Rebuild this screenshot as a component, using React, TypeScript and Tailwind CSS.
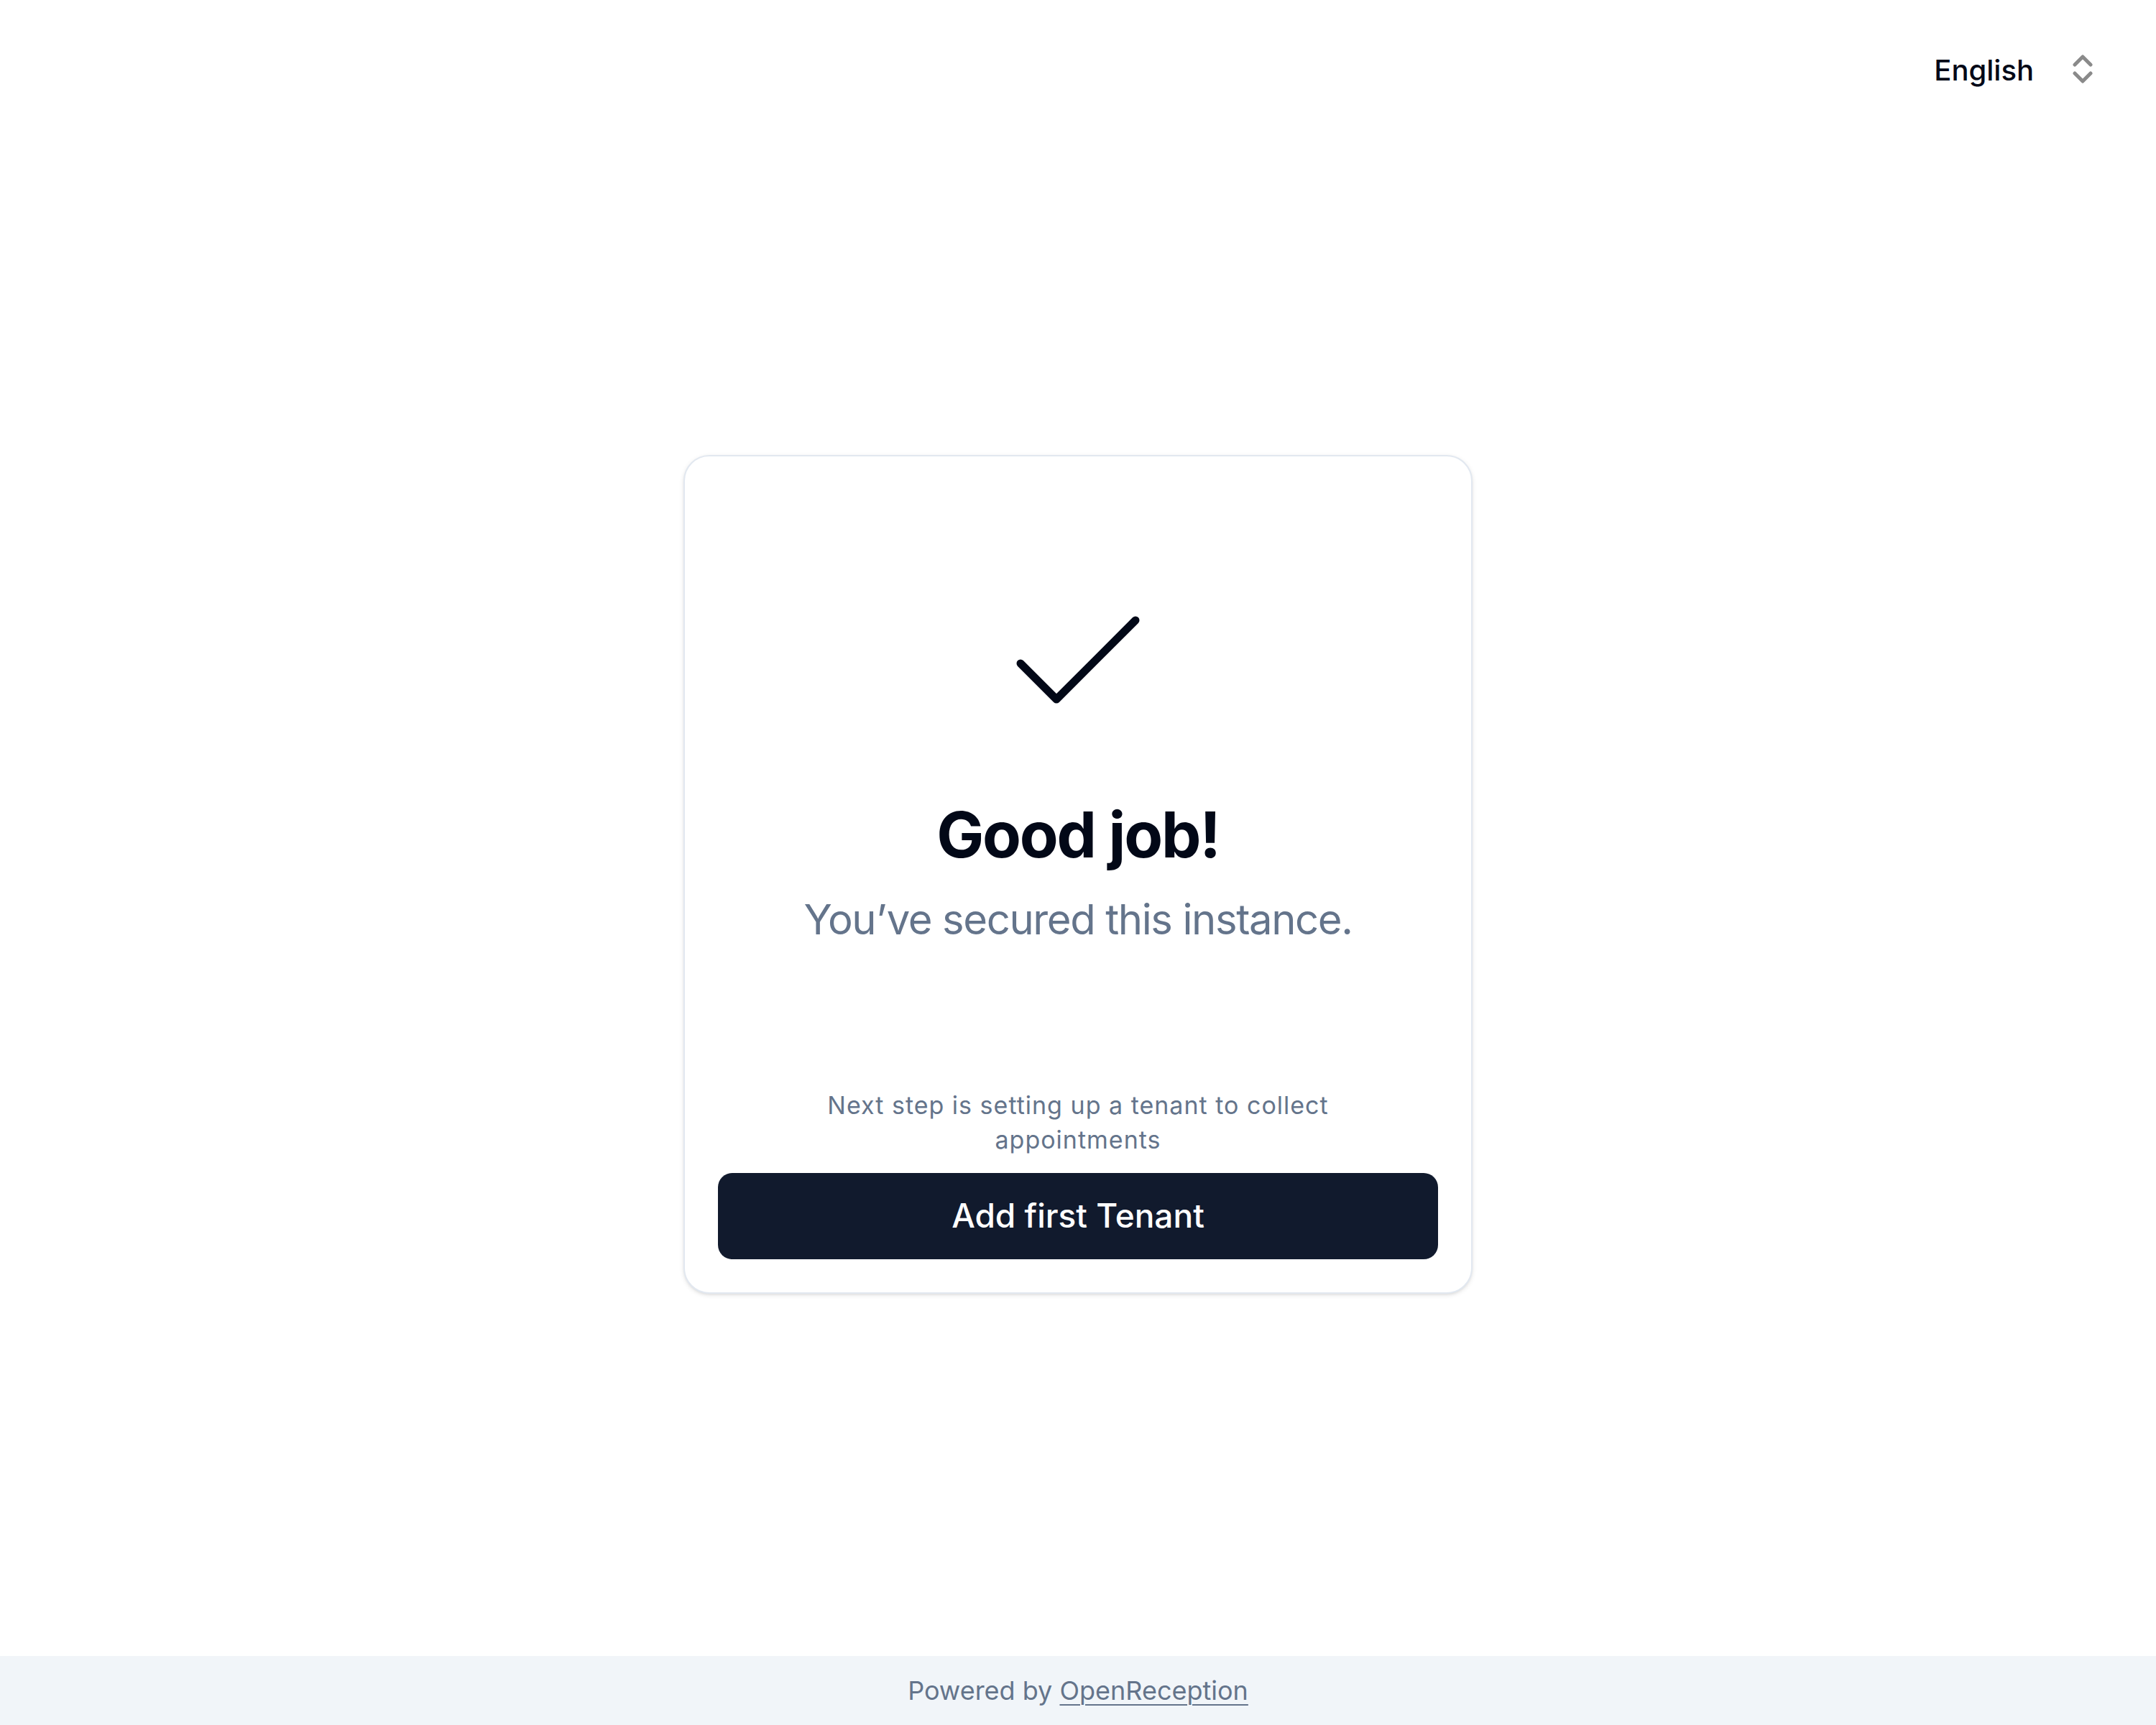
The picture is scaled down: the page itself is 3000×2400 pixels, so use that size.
import React from "react";

export default function App() {
  return (
    <div
      className="min-h-screen w-full flex flex-col bg-white"
      style={{ fontFamily: "Inter, 'Noto Sans', sans-serif" }}
    >
      <header className="h-[128px] flex justify-end items-start pt-[70px] pr-[88px]">
        <div className="flex items-center gap-[54px]">
          <span className="text-[40px] leading-[56px] font-medium text-[#020817]">English</span>
          <svg width="28" height="40" viewBox="0 0 28 40" fill="none" className="-mt-[4px]">
            <path
              d="M3 14 L14 3 L25 14"
              stroke="#8a8a8a"
              strokeWidth="5"
              strokeLinecap="round"
              strokeLinejoin="round"
            />
            <path
              d="M3 26 L14 37 L25 26"
              stroke="#8a8a8a"
              strokeWidth="5"
              strokeLinecap="round"
              strokeLinejoin="round"
            />
          </svg>
        </div>
      </header>

      <main className="flex-1 flex items-center justify-center">
        <div className="w-[1098px] rounded-[36px] border-2 border-[#e2e8f0] bg-white p-[46px] shadow-[0_2px_6px_0_rgba(0,0,0,0.1),0_2px_4px_-2px_rgba(0,0,0,0.1)] flex flex-col items-center">
          <svg
            width="240"
            height="240"
            viewBox="0 0 24 24"
            fill="none"
            className="mt-[122px]"
          >
            <path
              d="M20 6 9 17l-5-5"
              stroke="#020817"
              strokeWidth="1.1"
              strokeLinecap="round"
              strokeLinejoin="round"
            />
          </svg>
          <h1 className="mt-[74px] text-[88px] leading-[88px] font-bold tracking-tight text-[#020817] text-center">
            Good job!
          </h1>
          <p className="mt-[38px] text-[58px] leading-[72px] tracking-[-1.4px] text-[#64748b] text-center">
            You’ve secured this instance.
          </p>
          <p className="mt-[199px] max-w-[768px] text-[34px] leading-[48px] tracking-[1px] text-[#64748b] text-center">
            Next step is setting up a tenant to collect appointments
          </p>
          <button className="mt-[22px] w-full h-[120px] rounded-[20px] bg-[#111a2d] text-white text-[46px] font-medium flex items-center justify-center">
            Add first Tenant
          </button>
        </div>
      </main>

      <footer className="h-[96px] bg-[#f1f5f9] flex items-center justify-center">
        <p className="text-[36px] leading-[54px] text-[#64748b]">
          Powered by{" "}
          <a href="#" className="underline decoration-2 underline-offset-[6px]">
            OpenReception
          </a>
        </p>
      </footer>
    </div>
  );
}
